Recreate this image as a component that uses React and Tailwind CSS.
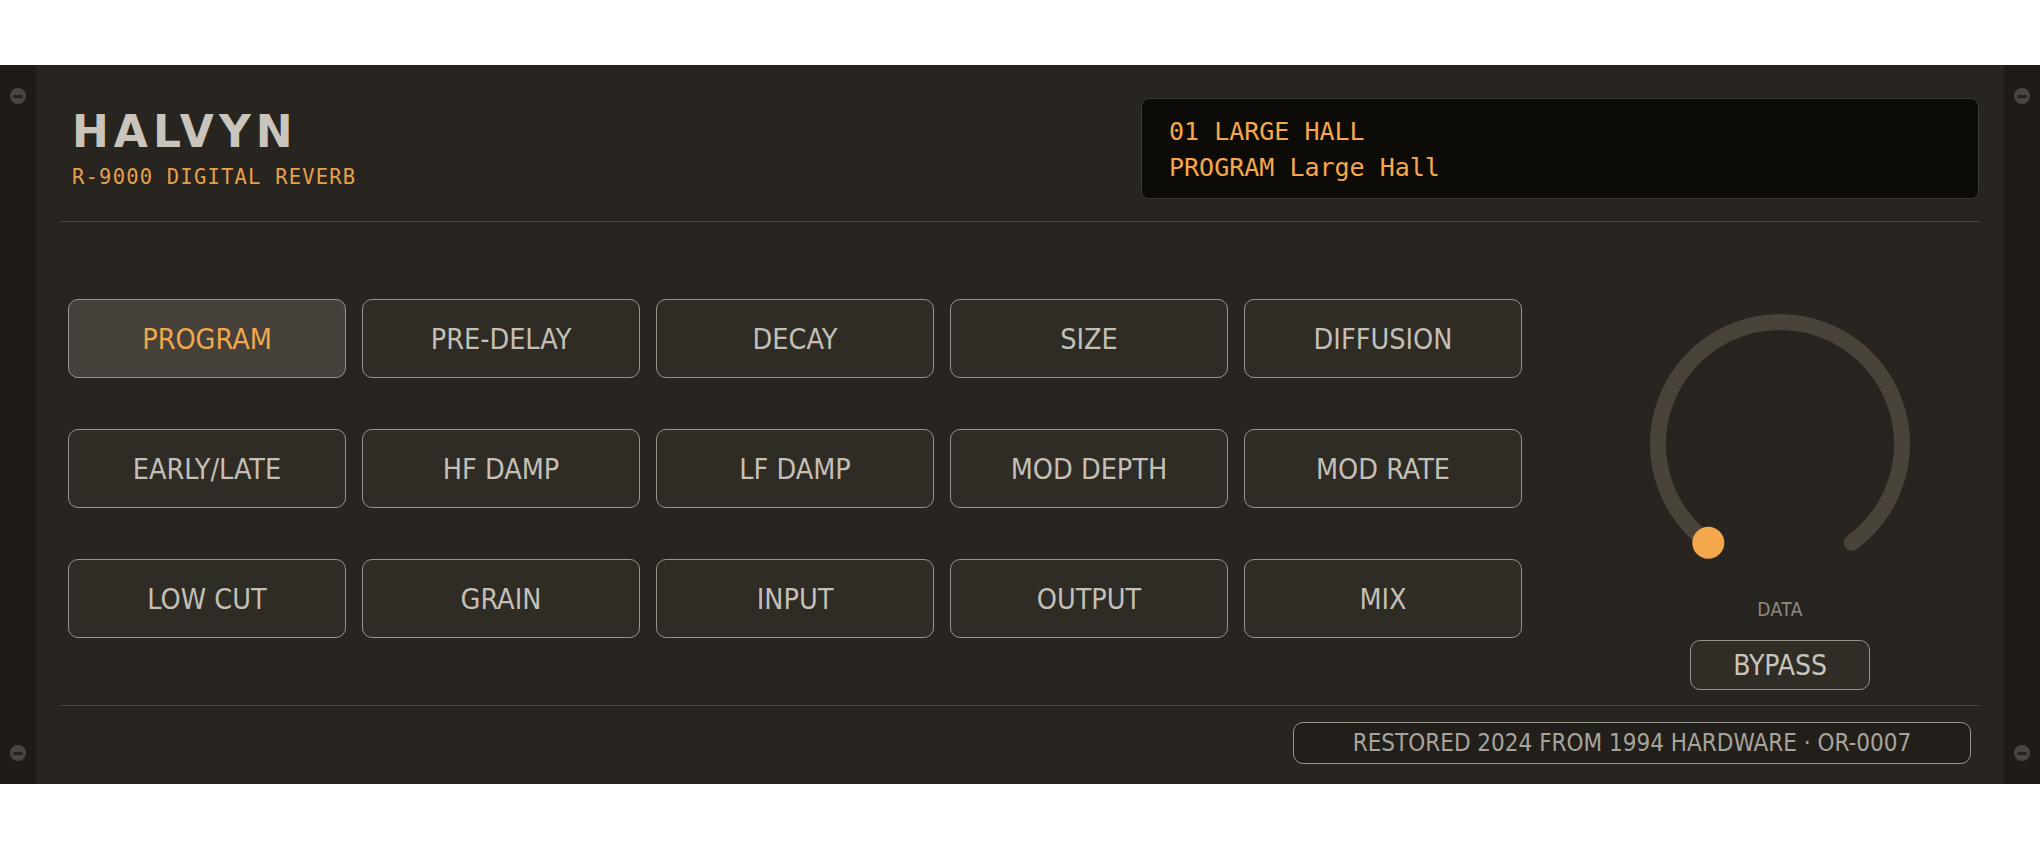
import React, { useState } from 'react';

const PARAMS = [
  'PROGRAM', 'PRE-DELAY', 'DECAY', 'SIZE', 'DIFFUSION',
  'EARLY/LATE', 'HF DAMP', 'LF DAMP', 'MOD DEPTH', 'MOD RATE',
  'LOW CUT', 'GRAIN', 'INPUT', 'OUTPUT', 'MIX',
];

const SANS = "font-['DejaVu_Sans_Condensed','DejaVu_Sans',sans-serif]";
const MONO = "font-['DejaVu_Sans_Mono','Liberation_Mono',monospace]";

// rack ear with two screws
function Rail() {
  return (
    <div className="w-[36px] shrink-0 bg-[#1f1c18] flex flex-col items-center justify-between py-[23px]">
      <Screw />
      <Screw />
    </div>
  );
}

function Screw() {
  return (
    <div className="w-4 h-4 rounded-full bg-[#4a463f] flex items-center justify-center">
      <div className="w-[10px] h-[3px] bg-[#25221d] rounded-sm" />
    </div>
  );
}

// data wheel: 288° track, value dot sits at the start of the sweep
function Knob() {
  const c = 136;
  const r = 122;
  const a = (144 * Math.PI) / 180;
  const sx = c - r * Math.sin(a);
  const ex = c + r * Math.sin(a);
  const y = c - r * Math.cos(a);
  return (
    <svg width="272" height="272" viewBox="0 0 272 272">
      <path
        d={`M ${sx} ${y} A ${r} ${r} 0 1 1 ${ex} ${y}`}
        fill="none"
        stroke="#49433a"
        strokeWidth="16"
        strokeLinecap="round"
      />
      <circle cx={sx} cy={y} r="16" fill="#f5a84b" />
    </svg>
  );
}

export default function App() {
  const [active, setActive] = useState('PROGRAM');

  return (
    <div className="min-h-screen bg-white pt-[65px]">
      <div className="flex h-[719px] bg-[#28241f]">
        <Rail />

        <main className="flex-1 px-6 flex flex-col">
          {/* header */}
          <div className="flex items-start justify-between pt-[33px] pb-[22px] pl-[12px] pr-px">
            <div className="pt-[12px]">
              <div className="font-['DejaVu_Sans',sans-serif] font-bold text-[44px] leading-[44px] tracking-[5px] text-[#c9c5bc]">
                HALVYN
              </div>
              <div className={`${MONO} mt-[9px] text-[20.5px] leading-[28px] tracking-[1.2px] text-[#e6a04a]`}>
                R-9000 DIGITAL REVERB
              </div>
            </div>
            <div className={`${MONO} w-[838px] h-[101px] rounded-lg border border-[#3b372f] bg-[#0d0b08] pl-[27px] pt-[15px] text-[25px] leading-[36px] text-[#f5a84b]`}>
              <div>01 LARGE HALL</div>
              <div>PROGRAM Large Hall</div>
            </div>
          </div>

          <div className="h-px bg-[#4a453d]" />

          {/* parameter keys + data wheel */}
          <div className="flex pt-[77px] pb-[15px] pl-[8px]">
            <div className="grid grid-cols-5 gap-x-4 gap-y-[51px] w-[1454px] self-start">
              {PARAMS.map((p) => (
                <button
                  key={p}
                  onClick={() => setActive(p)}
                  className={`${SANS} h-[79px] pt-1 rounded-[10px] border-[1.5px] border-[#98958d] text-[28.5px] ${
                    active === p ? 'bg-[#45413a] text-[#f2a84c]' : 'bg-[#2f2b25] text-[#c4c0b7]'
                  }`}
                >
                  {p}
                </button>
              ))}
            </div>

            <div className="ml-auto w-[400px] flex flex-col items-center pt-[9px]">
              <Knob />
              <div className={`${SANS} mt-[17px] text-[19px] leading-[25px] tracking-[0.5px] text-[#8f8a80]`}>DATA</div>
              <button className={`${SANS} mt-[18px] w-[180px] h-[50px] pt-0.5 rounded-[10px] border-[1.5px] border-[#98958d] bg-[#302c26] text-[28px] text-[#c9c5bc]`}>
                BYPASS
              </button>
            </div>
          </div>

          <div className="h-px bg-[#4a453d]" />

          {/* footer */}
          <div className="flex justify-end pt-4 pb-5 pr-[9px]">
            <div className={`${SANS} w-[678px] h-[42px] rounded-[10px] border-[1.5px] border-[#98958d] bg-[#221f1a] flex items-center justify-center text-[24px] text-[#a8a49c]`}>
              RESTORED 2024 FROM 1994 HARDWARE · OR-0007
            </div>
          </div>
        </main>

        <Rail />
      </div>
    </div>
  );
}
